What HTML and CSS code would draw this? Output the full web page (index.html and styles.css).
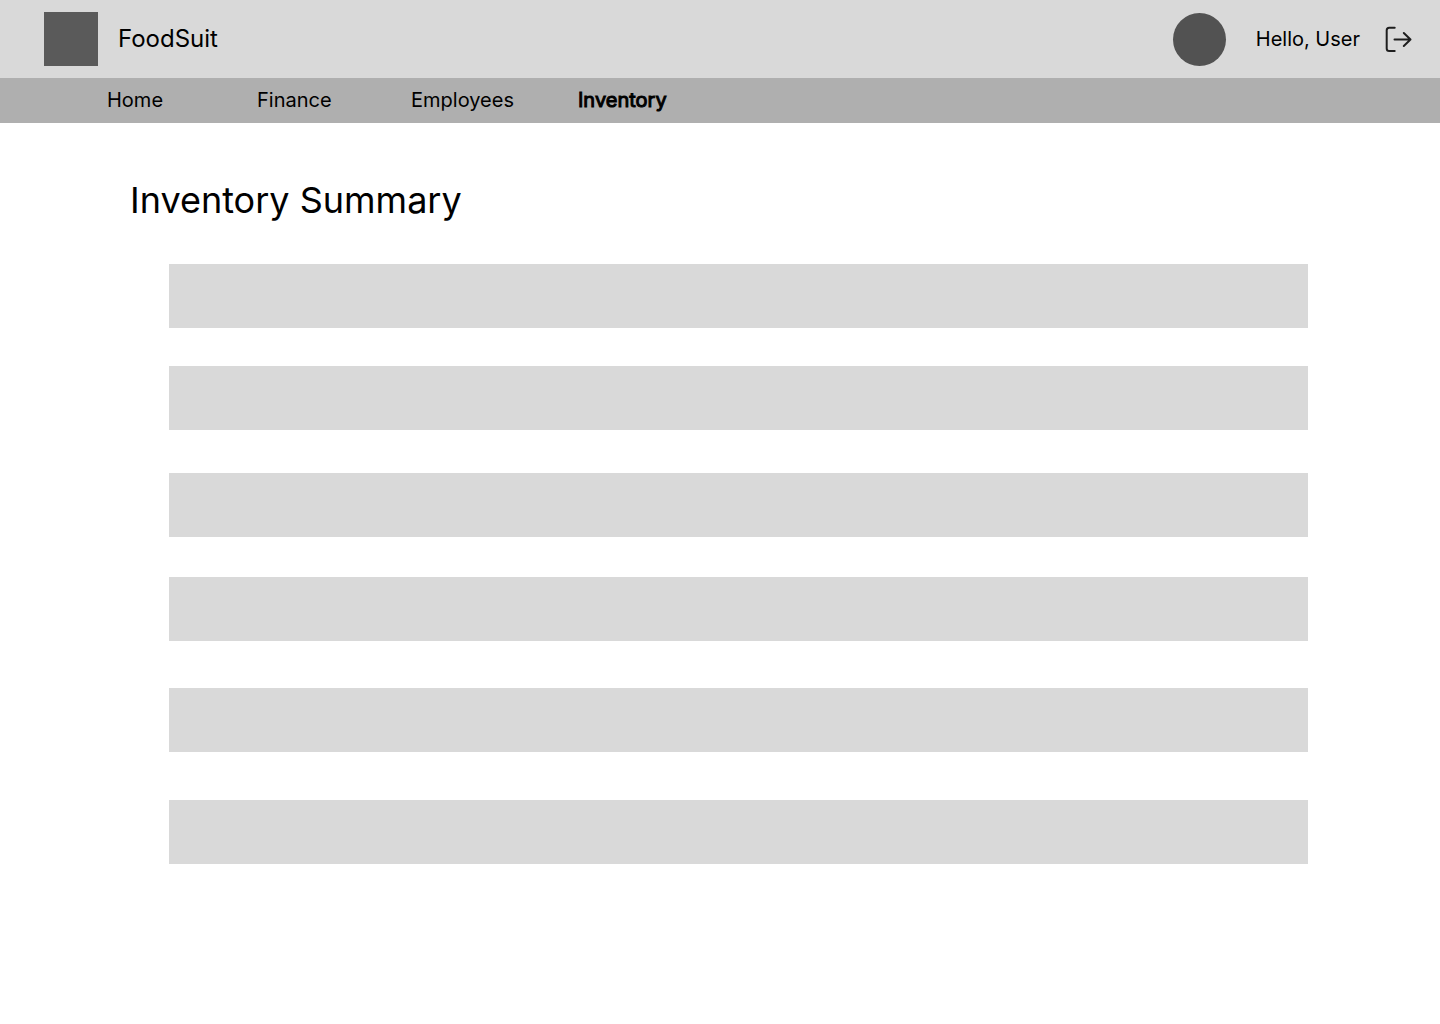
FILE: index.html
```html
<!DOCTYPE html>
<html lang="en">
<head>
<meta charset="utf-8">
<meta name="viewport" content="width=device-width, initial-scale=1">
<title>FoodSuit - Inventory</title>
<link rel="stylesheet" href="styles.css">
</head>
<body>
<header class="topbar">
  <div class="brand">
    <span class="logo"></span>
    <span class="brand-name">FoodSuit</span>
  </div>
  <div class="account">
    <span class="avatar"></span>
    <span class="greeting">Hello, User</span>
    <button class="logout" type="button" aria-label="Log out">
      <svg class="logout-icon" viewBox="0 0 28 28" fill="none" stroke="#1e1e1e" stroke-width="2" stroke-linecap="round" stroke-linejoin="round" aria-hidden="true">
        <path d="M10.700 2.700H5.200Q2.700 2.700 2.700 5.200V23.500Q2.700 26 5.200 26H10.700"/>
        <path d="M10.500 14.500H26.500M19.800 8L26.500 14.500L19.800 21"/>
      </svg>
    </button>
  </div>
</header>
<nav class="nav">
  <a class="nav-link" href="#home">Home</a>
  <a class="nav-link" href="#finance">Finance</a>
  <a class="nav-link" href="#employees">Employees</a>
  <a class="nav-link active" href="#inventory" aria-current="page">Inventory</a>
</nav>
<main class="content">
  <h1 class="title">Inventory Summary</h1>
  <ul class="list">
    <li class="row"></li>
    <li class="row"></li>
    <li class="row spaced"></li>
    <li class="row relaxed"></li>
    <li class="row wide"></li>
    <li class="row wider"></li>
  </ul>
</main>
</body>
</html>
```
FILE: styles.css
```css
* {
  box-sizing: border-box;
}

body {
  margin: 0;
  background: #fff;
  color: #000;
  font-family: Inter, sans-serif;
  font-size: 20px;
  line-height: 24px;
}

.topbar {
  display: flex;
  align-items: center;
  justify-content: space-between;
  height: 78px;
  padding: 0 28px 0 44px;
  background: #d9d9d9;
}

.brand,
.account {
  display: flex;
  align-items: center;
}

.brand {
  gap: 20px;
}

.logo {
  width: 54px;
  height: 54px;
  background: #5a5a5a;
}

.brand-name {
  font-size: 24px;
}

.avatar {
  width: 53px;
  height: 53px;
  margin-right: 30px;
  border-radius: 50%;
  background: #525252;
}

.logout {
  display: flex;
  margin-left: 24px;
  padding: 0;
  border: 0;
  background: none;
  cursor: pointer;
}

.logout-icon {
  width: 28px;
  height: 28px;
}

.nav {
  display: grid;
  grid-template-columns: 150px 154px 167px auto;
  justify-content: start;
  padding: 10px 107px 11px;
  background: #afafaf;
}

.nav-link {
  color: #000;
  text-decoration: none;
}

.active {
  -webkit-text-stroke: 1px #000;
}

.content {
  padding: 55px 132px 64px 130px;
}

.title {
  margin: 0;
  font-size: 36px;
  font-weight: 400;
  line-height: 44px;
}

.list {
  margin: 42px 0 0;
  padding: 0 0 0 39px;
  list-style: none;
}

.row {
  height: 64px;
  background: #d9d9d9;
}

.row + .row {
  margin-top: 38px;
}

.row + .spaced {
  margin-top: 43px;
}

.row + .relaxed {
  margin-top: 40px;
}

.row + .wide {
  margin-top: 47px;
}

.row + .wider {
  margin-top: 48px;
}
```
